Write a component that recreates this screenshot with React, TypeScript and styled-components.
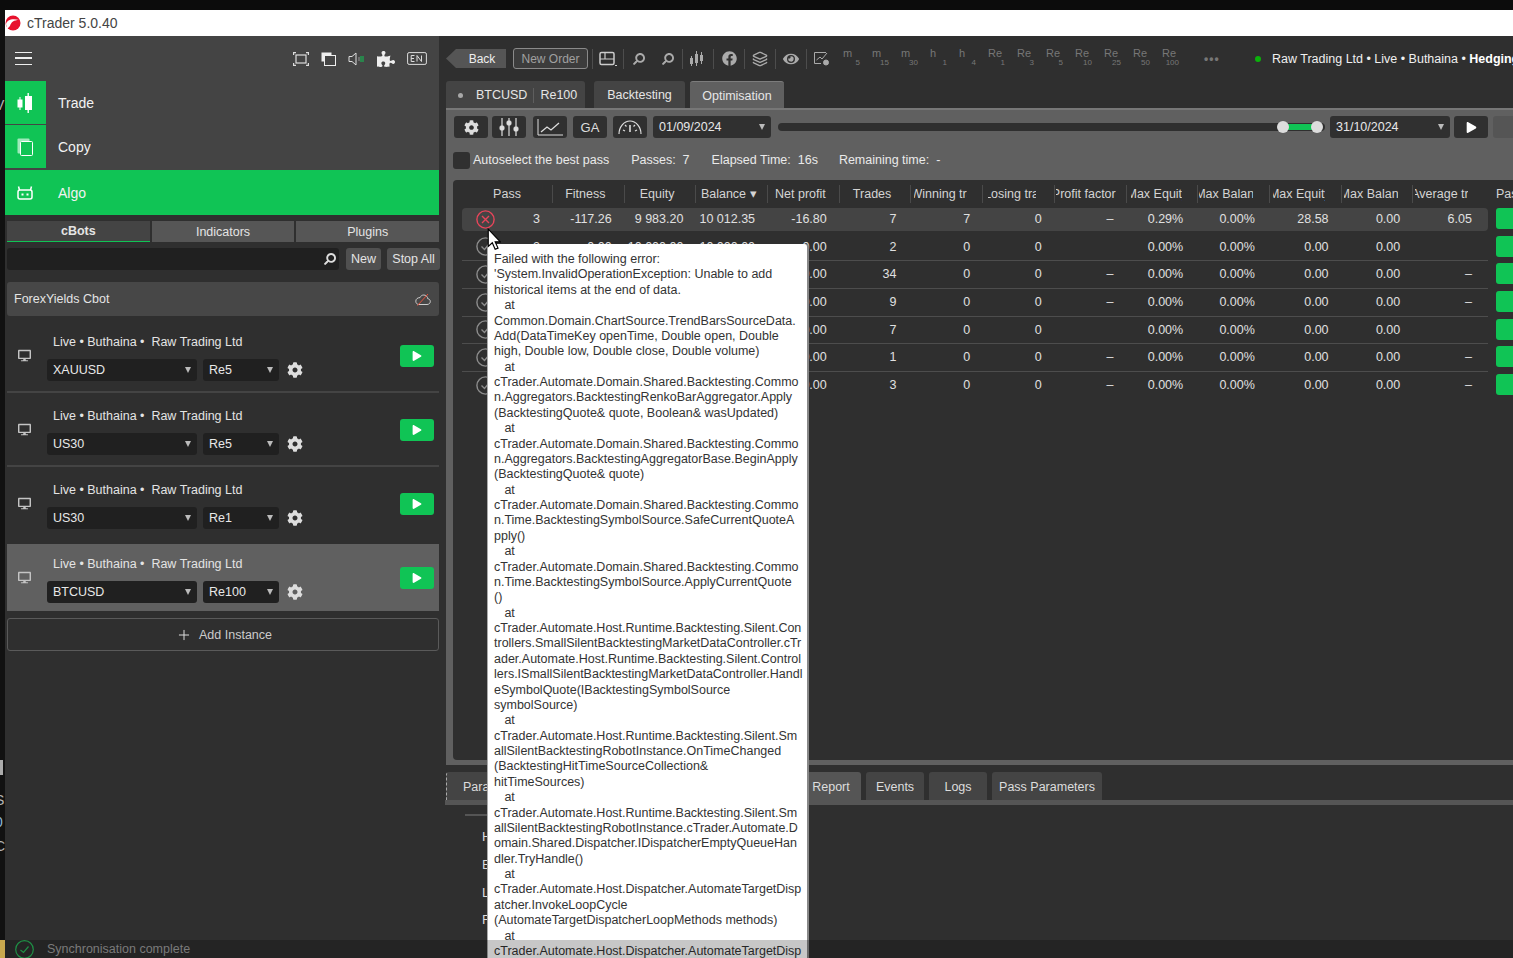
import React from 'react';
import styled, { createGlobalStyle } from 'styled-components';
import { FaCog, FaPuzzlePiece, FaDesktop, FaSearch, FaPlay, FaEye, FaFacebook } from 'react-icons/fa';
import { Layers, Plus } from 'lucide-react';

const GREEN = '#10c455';
const FONT = '"Liberation Sans", Arial, sans-serif';

const GlobalStyle = createGlobalStyle`
  html, body { margin: 0; padding: 0; background: #2f2f2f; overflow: hidden; }
  body { font-family: ${FONT}; font-size: 12.5px; color: #e4e4e4; }
  * { box-sizing: border-box; }
`;

const Page = styled.div`
  position: relative;
  width: 1513px;
  height: 958px;
  display: flex;
  flex-direction: column;
  overflow: hidden;
  background: #0c0c0c;
`;
const TopEdge = styled.div`
  height: 10px;
  flex: none;
`;
const Desk = styled.div`
  flex: 1;
  display: flex;
  min-height: 0;
`;
const Strip = styled.div`
  width: 5px;
  flex: none;
  display: flex;
  flex-direction: column;
  overflow: hidden;
  background: #111;
`;
const StripBit = styled.div<{ $h: number; $c: string; $w?: number; $mt?: string }>`
  height: ${p => p.$h}px;
  width: ${p => p.$w ?? 5}px;
  margin-top: ${p => p.$mt ?? '0'};
  background: ${p => p.$c};
  flex: none;
`;
const StripChar = styled.div<{ $mt: number; $c?: string }>`
  height: 14px;
  line-height: 14px;
  margin-top: ${p => p.$mt}px;
  margin-left: -5px;
  font-size: 14px;
  color: ${p => p.$c ?? '#b5b5b5'};
  flex: none;
`;
const Win = styled.div`
  flex: 1;
  min-width: 0;
  display: flex;
  flex-direction: column;
  background: #2f2f2f;
`;
const TitleBar = styled.div`
  height: 26px;
  flex: none;
  background: #fff;
  display: flex;
  align-items: center;
  color: #444;
  font-size: 14px;
  gap: 6px;
`;
const Body = styled.div`
  flex: 1;
  display: flex;
  min-height: 0;
`;

/* left column */
const Sidebar = styled.div`
  width: 434px;
  flex: none;
  display: flex;
  flex-direction: column;
`;
const SideTop = styled.div`
  background: #444;
`;
const SideHead = styled.div`
  height: 45px;
  display: flex;
  align-items: center;
  padding: 0 12px 0 10px;
  gap: 12px;
`;
const Burger = styled.div`
  width: 17px;
  height: 13px;
  margin-right: auto;
  border-top: 1.5px solid #eee;
  border-bottom: 1.5px solid #eee;
  position: relative;
  &::after {
    content: '';
    position: absolute;
    left: 0;
    right: 0;
    top: 4px;
    height: 1.5px;
    background: #eee;
  }
`;
const NavRow = styled.div<{ $full?: boolean; $h: number; $mb: number }>`
  height: ${p => p.$h}px;
  margin-bottom: ${p => p.$mb}px;
  display: flex;
  align-items: center;
  font-size: 14px;
  color: #f2f2f2;
  background: ${p => (p.$full ? GREEN : 'transparent')};
`;
const NavIcon = styled.div`
  width: 41px;
  height: 100%;
  background: ${GREEN};
  display: flex;
  align-items: center;
  justify-content: center;
  padding-right: 2px;
  margin-right: 12px;
`;
const SideBottom = styled.div`
  flex: 1;
  padding: 6px 0 0 2px;
  display: flex;
  flex-direction: column;
`;
const SideTabs = styled.div`
  display: flex;
  gap: 2px;
  height: 21px;
`;
const SideTab = styled.div<{ $on?: boolean }>`
  flex: 1;
  display: flex;
  align-items: center;
  justify-content: center;
  background: ${p => (p.$on ? '#444' : '#565656')};
  border-bottom: ${p => (p.$on ? `1px solid ${GREEN}` : 'none')};
  font-weight: ${p => (p.$on ? 'bold' : 'normal')};
`;
const SearchRow = styled.div`
  display: flex;
  height: 22px;
  margin-top: 6px;
  width: 433px;
`;
const SearchBox = styled.div`
  width: 332px;
  background: #202020;
  border-radius: 3px;
  display: flex;
  align-items: center;
  justify-content: flex-end;
  padding-right: 3px;
`;
const MirrorSearch = styled(FaSearch)`
  transform: scaleX(-1);
`;
const SmallBtn = styled.div<{ $w: number; $ml: number }>`
  width: ${p => p.$w}px;
  margin-left: ${p => p.$ml}px;
  background: #505050;
  border-radius: 3px;
  display: flex;
  align-items: center;
  justify-content: center;
`;
const BotCard = styled.div`
  height: 34px;
  margin-top: 12px;
  background: #474747;
  border-radius: 3px;
  display: flex;
  align-items: center;
  justify-content: space-between;
  padding: 0 8px 0 7px;
  flex: none;
`;
const Instance = styled.div<{ $sel?: boolean; $line?: boolean }>`
  height: ${p => (p.$line ? 71 : 67)}px;
  margin-top: 6px;
  margin-bottom: ${p => (p.$line ? -3 : 1)}px;
  background: ${p => (p.$sel ? '#606060' : 'transparent')};
  border-bottom: ${p => (p.$line ? '2px solid #444' : 'none')};
  display: flex;
  flex: none;
  padding-bottom: ${p => (p.$line ? 2 : 0)}px;
`;
const InstIcon = styled.div`
  width: 40px;
  display: flex;
  align-items: center;
  justify-content: center;
  padding-right: 5px;
  color: #c4c4c4;
`;
const InstMid = styled.div`
  display: flex;
  flex-direction: column;
  padding-top: 13px;
`;
const InstTitle = styled.div`
  height: 14px;
  margin-left: 6px;
  line-height: 14px;
  white-space: pre;
`;
const InstControls = styled.div`
  display: flex;
  align-items: center;
  margin-top: 10px;
  gap: 6px;
`;
const Select = styled.div<{ $w: number; $ml?: number; $panel?: boolean }>`
  width: ${p => p.$w}px;
  height: 22px;
  margin-left: ${p => p.$ml ?? 0}px;
  background: ${p => (p.$panel ? '#303030' : '#202020')};
  border-radius: 3px;
  display: flex;
  align-items: center;
  justify-content: space-between;
  padding: 0 6px;
  color: #e8e8e8;
  flex: none;
  &::after {
    content: '';
    border-left: 3.5px solid transparent;
    border-right: 3.5px solid transparent;
    border-top: 6px solid #bbb;
  }
`;
const Gear = styled(FaCog)`
  margin-left: 2px;
`;
const PlayBtn = styled.div`
  width: 34px;
  height: 22px;
  margin: 23px 5px 0 auto;
  background: ${GREEN};
  border-radius: 3px;
  display: flex;
  align-items: center;
  justify-content: center;
  color: #fff;
`;
const AddInstance = styled.div`
  height: 33px;
  margin-top: 6px;
  border: 1px solid #5a5a5a;
  border-radius: 3px;
  display: flex;
  align-items: center;
  justify-content: center;
  gap: 7px;
  padding-left: 2px;
  color: #ccc;
  flex: none;
`;

/* right column */
const Right = styled.div`
  flex: 1;
  min-width: 0;
  margin-left: 6px;
  display: flex;
  flex-direction: column;
  overflow: hidden;
`;
const TopBar = styled.div`
  height: 45px;
  flex: none;
  display: flex;
  align-items: center;
  white-space: nowrap;
`;
const BackBtn = styled.div`
  width: 60px;
  height: 19px;
  flex: none;
  margin-left: 1px;
  background: #555;
  clip-path: polygon(0 50%, 10px 0, 100% 0, 100% 100%, 10px 100%);
  display: flex;
  align-items: center;
  justify-content: center;
  padding-left: 12px;
  font-size: 12px;
  color: #eee;
`;
const NewOrder = styled.div`
  width: 75px;
  height: 21px;
  flex: none;
  margin: 0 4px 0 7px;
  border: 1px solid #8a8a8a;
  border-radius: 3px;
  background: #3c3c3c;
  display: flex;
  align-items: center;
  justify-content: center;
  font-size: 12px;
  color: #a0a0a0;
`;
const ToolSlot = styled.div<{ $w?: number }>`
  width: ${p => p.$w ?? 31}px;
  height: 20px;
  border-left: 1px solid #4d4d4d;
  display: flex;
  align-items: center;
  justify-content: space-around;
  color: #aaa;
  flex: none;
`;
const TimeFrame = styled.div`
  width: 29px;
  height: 20px;
  flex: none;
  padding-left: 6px;
  margin-top: -2px;
  color: #777;
  font-size: 11px;
  line-height: 11px;
  position: relative;
  & > span {
    position: absolute;
    right: 6px;
    top: 11px;
    font-size: 8px;
    line-height: 8px;
  }
`;
const Dots = styled.div`
  margin-left: 19px;
  color: #777;
  font-size: 12px;
  letter-spacing: 1px;
  width: 51px;
  flex: none;
  font-weight: bold;
`;
const LiveDot = styled.div`
  width: 6px;
  height: 6px;
  border-radius: 50%;
  background: #0bb10b;
  margin-right: 11px;
  flex: none;
`;
const AccountText = styled.div`
  color: #f0f0f0;
  flex: none;
  & > b { color: #fff; }
`;
const TabRow = styled.div`
  height: 27px;
  flex: none;
  display: flex;
  align-items: flex-end;
  gap: 5px;
  margin-left: 1px;
`;
const Tab = styled.div<{ $w: number; $on?: boolean; $sym?: boolean }>`
  width: ${p => p.$w}px;
  height: 27px;
  background: ${p => (p.$on ? '#606060' : '#444')};
  border-radius: 3px 3px 0 0;
  display: flex;
  align-items: center;
  justify-content: ${p => (p.$sym ? 'flex-start' : 'center')};
  padding: ${p => (p.$sym ? '1px 0 0 12px' : '1px 0 0')};
  border-top: ${p => (p.$on ? '1px solid #7c7c7c' : 'none')};
  margin-right: ${p => (p.$sym ? 4 : 0)}px;
  flex: none;
  color: #e6e6e6;
`;
const TabDot = styled.span`
  width: 5px;
  height: 5px;
  border-radius: 50%;
  background: #a8a8a8;
  margin-right: 13px;
`;
const TabSep = styled.span`
  width: 1px;
  height: 15px;
  background: #5e5e5e;
  margin: 0 6px;
`;
const OptPanel = styled.div`
  height: 657px;
  flex: none;
  background: #606060;
  border-top: 2px solid #777;
  margin-left: 1px;
  padding: 6px 0 5px 7px;
  display: flex;
  flex-direction: column;
`;
const PanelBar = styled.div`
  display: flex;
  height: 22px;
  flex: none;
  align-items: center;
`;
const ToolBtn = styled.div<{ $ml?: number }>`
  width: 34px;
  height: 22px;
  margin-left: ${p => p.$ml ?? 6}px;
  background: #303030;
  border-radius: 3px;
  display: flex;
  align-items: center;
  justify-content: center;
  color: #ddd;
  flex: none;
  font-size: 13px;
`;
const StopBtn = styled(ToolBtn)`
  background: #555;
`;
const RangeTrack = styled.div`
  width: 547px;
  height: 8px;
  margin: 0 5px 0 7px;
  border-radius: 4px;
  background: #2f2f2f;
  position: relative;
  flex: none;
`;
const RangeFill = styled.div`
  position: absolute;
  left: 505px;
  right: 8px;
  top: 1px;
  height: 6px;
  background: ${GREEN};
`;
const RangeKnob = styled.div<{ $x: number }>`
  position: absolute;
  left: ${p => p.$x}px;
  top: -2px;
  width: 12px;
  height: 12px;
  border-radius: 50%;
  background: #ddd;
`;
const AutoRow = styled.div`
  display: flex;
  align-items: center;
  height: 16px;
  margin-top: 14px;
  flex: none;
  color: #eaeaea;
`;
const Check = styled.div`
  width: 17px;
  height: 17px;
  background: #303030;
  border-radius: 3px;
  margin-right: 3px;
`;
const Stat = styled.span<{ $ml: number }>`
  margin-left: ${p => p.$ml}px;
  white-space: pre;
`;
const TablePanel = styled.div`
  margin-top: 12px;
  flex: 1;
  background: #2f2f2f;
  border-radius: 4px 0 0 4px;
  padding-left: 9px;
  overflow: hidden;
`;
const COLS = '90px repeat(13, 71.7px) 4px';
const HeadRow = styled.div`
  height: 28px;
  display: flex;
  align-items: center;
`;
const HeadGrid = styled.div`
  width: 1026px;
  display: grid;
  grid-template-columns: ${COLS};
  flex: none;
`;
const HeadCell = styled.div<{ $first?: boolean }>`
  height: 18px;
  line-height: 18px;
  white-space: nowrap;
  color: #d4d4d4;
  text-align: center;
  padding-right: ${p => (p.$first ? 0 : 6)}px;
  border-left: ${p => (p.$first ? 'none' : '1px solid #4a4a4a')};
`;
/* long captions are cut on both sides, as the app cuts them */
const HeadClip = styled.div<{ $w: number; $ml: number }>`
  width: ${p => p.$w}px;
  margin-left: ${p => p.$ml}px;
  overflow: hidden;
  text-align: left;
  text-indent: -4px;
`;
const HeadLast = styled.div`
  margin-left: 8px;
  color: #d4d4d4;
`;
const Row = styled.div`
  height: 27.7px;
  display: flex;
  align-items: flex-start;
`;
const RowGrid = styled.div<{ $active?: boolean; $line?: boolean }>`
  width: 1026px;
  flex: none;
  display: grid;
  grid-template-columns: ${COLS};
  height: ${p => (p.$active ? 23 : 25.7)}px;
  background: ${p => (p.$active ? '#444' : 'transparent')};
  border-radius: ${p => (p.$active ? 4 : 0)}px;
  border-bottom: ${p => (p.$line ? '1px solid #4d4d4d' : 'none')};
`;
const Cell = styled.div`
  height: 22px;
  line-height: 22px;
  text-align: right;
  padding-right: 12px;
  white-space: pre;
  color: #e0e0e0;
  &:nth-child(6), &:nth-child(10), &:nth-child(11) { padding-right: 14px; }
`;
const FirstCell = styled(Cell)`
  display: flex;
  align-items: center;
  justify-content: space-between;
  padding-left: 14px;
`;
const PassBtn = styled.div`
  width: 60px;
  height: 21px;
  margin-left: 8px;
  background: ${GREEN};
  border-radius: 3px 0 0 3px;
  flex: none;
`;
const BottomArea = styled.div`
  flex: 1;
  margin-top: 7px;
  min-height: 0;
  display: flex;
  flex-direction: column;
`;
const BottomTabs = styled.div`
  height: 28px;
  flex: none;
  display: flex;
  gap: 5px;
  margin-left: 1px;
`;
const LowerTab = styled.div<{ $w: number; $on?: boolean }>`
  width: ${p => p.$w}px;
  background: ${p => (p.$on ? '#555' : '#444')};
  border-radius: 3px 3px 0 0;
  display: flex;
  align-items: center;
  justify-content: center;
  padding-top: 2px;
  color: #ddd;
  flex: none;
`;
const FirstTab = styled(LowerTab)`
  justify-content: flex-start;
  padding-left: 16px;
  border-left: 1px dashed #aaa;
`;
const LowerRule = styled.div`
  height: 5px;
  background: #555;
  flex: none;
`;
const ParamBox = styled.div`
  flex: 1;
  margin-left: 7px;
  padding: 9px 0 0 13px;
  background: #2f2f2f;
`;
const ParamRule = styled.div`
  width: 40px;
  height: 2px;
  background: #555;
  margin-bottom: 14px;
`;
const ParamLabel = styled.div`
  height: 27.8px;
  padding-left: 17px;
  line-height: 14px;
  font-size: 13px;
  color: #ddd;
`;

/* overlays */
const Tooltip = styled.div`
  position: absolute;
  left: 488px;
  top: 244px;
  width: 319px;
  height: 730px;
  background: #fff;
  border-radius: 3px;
  box-shadow: 2px 0 0 #888, -1px 0 0 #aaa;
  padding: 8px 0 0 6px;
  color: #333;
  line-height: 15.37px;
  overflow: hidden;
`;
const TipLine = styled.div`
  white-space: pre;
`;
const Cursor = styled.svg`
  position: absolute;
  left: 487px;
  top: 228px;
`;
const StatusBar = styled.div`
  position: absolute;
  left: 5px;
  right: 0;
  bottom: 0;
  height: 18px;
  background: rgba(0, 0, 0, 0.22);
  display: flex;
  align-items: center;
  padding-left: 10px;
  color: #7a7a7a;
  gap: 13px;
`;

const Logo = () => (
  <svg width="16" height="16" viewBox="0 0 16 16">
    <circle cx="8" cy="8" r="7.5" fill="#e8112d" />
    <path d="M1 9 C2 5 7 3 14 5 C9 5 6 7 5 11 L2 14 Z" fill="#fff" />
  </svg>
);
const FocusIcon = () => (
  <svg width="16" height="14" viewBox="0 0 16 14" fill="none" stroke="#ddd" strokeWidth="1.2">
    <path d="M0.6 3V0.6H3M13 0.6H15.4V3M15.4 11V13.4H13M3 13.4H0.6V11" />
    <rect x="3" y="3" width="10" height="8" />
  </svg>
);
const WindowsIcon = () => (
  <svg width="15" height="14" viewBox="0 0 15 14" fill="none">
    <rect x="0.5" y="0.5" width="10" height="9" fill="#eee" />
    <rect x="3.5" y="3.5" width="11" height="10" fill="#444" stroke="#eee" />
  </svg>
);
const SpeakerIcon = () => (
  <svg width="17" height="14" viewBox="0 0 17 14" fill="none">
    <path d="M1 4.5H4L8 1V13L4 9.5H1Z" stroke="#ddd" />
    <path d="M11 5V9" stroke="#9a9a9a" />
    <path d="M13 4V10M15 4V10" stroke={GREEN} />
  </svg>
);
const LangIcon = () => (
  <svg width="20" height="13" viewBox="0 0 20 13" fill="none">
    <rect x="0.6" y="0.6" width="18.8" height="11.8" rx="1.5" stroke="#ddd" />
    <path d="M7.5 3.5H4.2V9.5H7.5M4.2 6.5H7M10 9.5V3.5L14.5 9.5V3.5" stroke="#ddd" />
  </svg>
);
const CandleIcon = () => (
  <svg width="16" height="20" viewBox="0 0 16 20" fill="#fff">
    <path d="M2.5 4h1v2.5H5.5v8H3.5V17h-1v-2.5H0.5v-8h2z" />
    <path d="M10.5 0h1.4v3H15v14h-3.1v3h-1.4v-3H8V3h2.5z" />
  </svg>
);
const CopyIcon = () => (
  <svg width="16" height="18" viewBox="0 0 16 18" fill="none">
    <rect x="0.5" y="0.5" width="12" height="15" rx="1" fill="#9fe9bb" />
    <rect x="3.5" y="3.5" width="12" height="14" rx="1" fill={GREEN} stroke="#fff" />
  </svg>
);
const RobotIcon = () => (
  <svg width="16" height="14" viewBox="0 0 16 14" fill="none" stroke="#fff" strokeWidth="1.5">
    <rect x="1" y="4" width="14" height="9" rx="2" />
    <path d="M2.5 4L1.5 0.5M13.5 4L14.5 0.5" />
    <path d="M4.5 8.5H6.5M9.5 8.5H11.5" strokeWidth="2" />
  </svg>
);
const CloudOff = () => (
  <svg width="16" height="13" viewBox="0 0 16 13" fill="none">
    <path d="M4 11.5H12C14 11.5 15.3 10.2 15.3 8.5C15.3 6.8 14 5.8 12.8 5.8C12.5 3.5 10.8 2 8.8 2C7 2 5.7 3 5 4.6C2.6 4.6 0.8 6 0.8 8.2C0.8 10.2 2.2 11.5 4 11.5Z" stroke="#ccc" />
    <path d="M2.5 12.5L13 1" stroke="#e8503a" />
  </svg>
);
const LayoutIcon = () => (
  <svg width="18" height="16" viewBox="0 0 18 16" fill="none" stroke="#ccc" strokeWidth="1.5">
    <rect x="1" y="1.5" width="14" height="12" rx="1.5" />
    <path d="M1 8H15M6 8V1.5" strokeWidth="1.2" />
    <path d="M16 14.5H18" strokeWidth="1" />
  </svg>
);
const CandlesSmall = () => (
  <svg width="18" height="16" viewBox="0 0 18 16" fill="#aaa">
    <rect x="1" y="7" width="3" height="6" />
    <rect x="2" y="5" width="1" height="10" />
    <rect x="6" y="3" width="3" height="9" />
    <rect x="7" y="0" width="1" height="15" />
    <rect x="11" y="4" width="3" height="6" />
    <rect x="12" y="1" width="1" height="12" />
  </svg>
);
const ChartGear = () => (
  <svg width="19" height="17" viewBox="0 0 19 17" fill="none" stroke="#aaa">
    <path d="M13 2.5H1.5V13.5H8" />
    <path d="M3.5 10L7 7L9 9L14 3" />
    <circle cx="13" cy="12.5" r="2.5" fill="#aaa" />
  </svg>
);
const SlidersIcon = () => (
  <svg width="20" height="18" viewBox="0 0 20 18" fill="#ddd" stroke="#ddd">
    <path d="M3 0V18M10 0V18M17 0V18" strokeWidth="1.2" />
    <rect x="1" y="8" width="4" height="4" rx="1" />
    <rect x="8" y="3" width="4" height="4" rx="1" />
    <rect x="15" y="9" width="4" height="4" rx="1" />
  </svg>
);
const LineChartIcon = () => (
  <svg width="26" height="17" viewBox="0 0 26 17" fill="none" stroke="#ddd">
    <path d="M1 0V16H26" />
    <path d="M4 13L10 8L14 11L22 4" stroke="#ddd" strokeWidth="1.3" />
  </svg>
);
const GaugeIcon = () => (
  <svg width="26" height="16" viewBox="0 0 26 16" fill="none" stroke="#ddd" strokeWidth="1.2">
    <path d="M2 15C2 8 7 2 13 2C19 2 24 8 24 15" />
    <path d="M13 13V6" strokeWidth="1.6" />
    <path d="M6 11L8 12M20 11L18 12M8 6L9.5 7.5M18 6L16.5 7.5" />
  </svg>
);
const StatusIcon = ({ failed }: { failed?: boolean }) => (
  <svg width="19" height="19" viewBox="0 0 19 19" fill="none" stroke={failed ? '#e8455a' : '#8d8d8d'} strokeWidth="1.4">
    <circle cx="9.5" cy="9.5" r="8.6" />
    {failed ? <path d="M6 6L13 13M13 6L6 13" /> : <path d="M5.5 9.5L8.5 12.5L13.5 6.5" />}
  </svg>
);

const timeframes = [
  ['m', '5'], ['m', '15'], ['m', '30'], ['h', '1'], ['h', '4'], ['Re', '1'],
  ['Re', '3'], ['Re', '5'], ['Re', '10'], ['Re', '25'], ['Re', '50'], ['Re', '100'],
];

const instances = [
  { symbol: 'XAUUSD', period: 'Re5', line: true },
  { symbol: 'US30', period: 'Re5', line: true },
  { symbol: 'US30', period: 'Re1' },
  { symbol: 'BTCUSD', period: 'Re100', sel: true },
];

const headers: { t: string; w?: number; ml?: number }[] = [
  { t: 'Fitness' }, { t: 'Equity' }, { t: 'Balance ▾' }, { t: 'Net profit' }, { t: 'Trades' },
  { t: 'Winning trades', w: 53, ml: 3 },
  { t: 'Losing trades', w: 48, ml: 5 },
  { t: 'Profit factor', w: 65, ml: 1 },
  { t: 'Max Equity', w: 51, ml: 4 },
  { t: 'Max Balance', w: 54, ml: 1 },
  { t: 'Max Equity', w: 52, ml: 3 },
  { t: 'Max Balance', w: 54, ml: 2 },
  { t: 'Average trade', w: 53, ml: 2 },
];

const rows = [
  { pass: '3', v: ['-117.26', '9 983.20', '10 012.35', '-16.80', '7', '7', '0', '–', '0.29%', '0.00%', '28.58', '0.00', '6.05'], failed: true },
  { pass: '2', v: ['0.00', '10 000.00', '10 000.00', '0.00', '2', '0', '0', '', '0.00%', '0.00%', '0.00', '0.00', ''], line: true },
  { pass: '1', v: ['0.00', '10 000.00', '10 000.00', '0.00', '34', '0', '0', '–', '0.00%', '0.00%', '0.00', '0.00', '–'], line: true },
  { pass: '4', v: ['0.00', '10 000.00', '10 000.00', '0.00', '9', '0', '0', '–', '0.00%', '0.00%', '0.00', '0.00', '–'], line: true },
  { pass: '5', v: ['0.00', '10 000.00', '10 000.00', '0.00', '7', '0', '0', '', '0.00%', '0.00%', '0.00', '0.00', ''], line: true },
  { pass: '6', v: ['0.00', '10 000.00', '10 000.00', '0.00', '1', '0', '0', '–', '0.00%', '0.00%', '0.00', '0.00', '–'], line: true },
  { pass: '7', v: ['0.00', '10 000.00', '10 000.00', '0.00', '3', '0', '0', '–', '0.00%', '0.00%', '0.00', '0.00', '–'] },
];

const errorLines = [
  'Failed with the following error:',
  "'System.InvalidOperationException: Unable to add",
  'historical items at the end of data.',
  '   at',
  'Common.Domain.ChartSource.TrendBarsSourceData.',
  'Add(DataTimeKey openTime, Double open, Double',
  'high, Double low, Double close, Double volume)',
  '   at',
  'cTrader.Automate.Domain.Shared.Backtesting.Commo',
  'n.Aggregators.BacktestingRenkoBarAggregator.Apply',
  '(BacktestingQuote& quote, Boolean& wasUpdated)',
  '   at',
  'cTrader.Automate.Domain.Shared.Backtesting.Commo',
  'n.Aggregators.BacktestingAggregatorBase.BeginApply',
  '(BacktestingQuote& quote)',
  '   at',
  'cTrader.Automate.Domain.Shared.Backtesting.Commo',
  'n.Time.BacktestingSymbolSource.SafeCurrentQuoteA',
  'pply()',
  '   at',
  'cTrader.Automate.Domain.Shared.Backtesting.Commo',
  'n.Time.BacktestingSymbolSource.ApplyCurrentQuote',
  '()',
  '   at',
  'cTrader.Automate.Host.Runtime.Backtesting.Silent.Con',
  'trollers.SmallSilentBacktestingMarketDataController.cTr',
  'ader.Automate.Host.Runtime.Backtesting.Silent.Control',
  'lers.ISmallSilentBacktestingMarketDataController.Handl',
  'eSymbolQuote(IBacktestingSymbolSource',
  'symbolSource)',
  '   at',
  'cTrader.Automate.Host.Runtime.Backtesting.Silent.Sm',
  'allSilentBacktestingRobotInstance.OnTimeChanged',
  '(BacktestingHitTimeSourceCollection&',
  'hitTimeSources)',
  '   at',
  'cTrader.Automate.Host.Runtime.Backtesting.Silent.Sm',
  'allSilentBacktestingRobotInstance.cTrader.Automate.D',
  'omain.Shared.Dispatcher.IDispatcherEmptyQueueHan',
  'dler.TryHandle()',
  '   at',
  'cTrader.Automate.Host.Dispatcher.AutomateTargetDisp',
  'atcher.InvokeLoopCycle',
  '(AutomateTargetDispatcherLoopMethods methods)',
  '   at',
  'cTrader.Automate.Host.Dispatcher.AutomateTargetDisp',
];

const App = () => {
  return (
    <Page>
      <GlobalStyle />
      <TopEdge />
      <Desk>
        <Strip>
          <StripChar $mt={88}>V</StripChar>
          <StripBit $h={15} $w={3} $c="#aaa" $mt="648px" />
          <StripChar $mt={18}>S</StripChar>
          <StripChar $mt={8} $c="#8fb8d8">0</StripChar>
          <StripChar $mt={10}>C</StripChar>
          <StripBit $h={18} $c="#c9a84e" $mt="auto" />
        </Strip>
        <Win>
          <TitleBar>
            <Logo />
            cTrader 5.0.40
          </TitleBar>
          <Body>
            <Sidebar>
              <SideTop>
                <SideHead>
                  <Burger />
                  <FocusIcon />
                  <WindowsIcon />
                  <SpeakerIcon />
                  <FaPuzzlePiece size={18} color="#eee" />
                  <LangIcon />
                </SideHead>
                <NavRow $h={43} $mb={1}>
                  <NavIcon><CandleIcon /></NavIcon>
                  Trade
                </NavRow>
                <NavRow $h={43} $mb={2}>
                  <NavIcon><CopyIcon /></NavIcon>
                  Copy
                </NavRow>
                <NavRow $h={45} $mb={0} $full>
                  <NavIcon><RobotIcon /></NavIcon>
                  Algo
                </NavRow>
              </SideTop>
              <SideBottom>
                <SideTabs>
                  <SideTab $on>cBots</SideTab>
                  <SideTab>Indicators</SideTab>
                  <SideTab>Plugins</SideTab>
                </SideTabs>
                <SearchRow>
                  <SearchBox>
                    <MirrorSearch size={12} color="#ddd" />
                  </SearchBox>
                  <SmallBtn $w={35} $ml={7}>New</SmallBtn>
                  <SmallBtn $w={53} $ml={6}>Stop All</SmallBtn>
                </SearchRow>
                <BotCard>
                  ForexYields Cbot
                  <CloudOff />
                </BotCard>
                {instances.map((it, i) => (
                  <Instance key={i} $sel={it.sel} $line={it.line}>
                    <InstIcon><FaDesktop size={13} /></InstIcon>
                    <InstMid>
                      <InstTitle>Live • Buthaina •  Raw Trading Ltd</InstTitle>
                      <InstControls>
                        <Select $w={150}>{it.symbol}</Select>
                        <Select $w={76}>{it.period}</Select>
                        <Gear size={16} color="#ddd" />
                      </InstControls>
                    </InstMid>
                    <PlayBtn><FaPlay size={10} /></PlayBtn>
                  </Instance>
                ))}
                <AddInstance>
                  <Plus size={16} strokeWidth={1.5} color="#ddd" />
                  Add Instance
                </AddInstance>
              </SideBottom>
            </Sidebar>
            <Right>
              <TopBar>
                <BackBtn>Back</BackBtn>
                <NewOrder>New Order</NewOrder>
                <ToolSlot><LayoutIcon /></ToolSlot>
                <ToolSlot $w={59}>
                  <MirrorSearch size={12} />
                  <MirrorSearch size={12} />
                </ToolSlot>
                <ToolSlot><CandlesSmall /></ToolSlot>
                <ToolSlot><FaFacebook size={15} /></ToolSlot>
                <ToolSlot><Layers size={16} /></ToolSlot>
                <ToolSlot><FaEye size={16} /></ToolSlot>
                <ToolSlot><ChartGear /></ToolSlot>
                {timeframes.map(([a, b], i) => (
                  <TimeFrame key={i}>{a}<span>{b}</span></TimeFrame>
                ))}
                <Dots>•••</Dots>
                <LiveDot />
                <AccountText>Raw Trading Ltd • Live • Buthaina • <b>Hedging</b></AccountText>
              </TopBar>
              <TabRow>
                <Tab $w={139} $sym><TabDot />BTCUSD<TabSep />Re100</Tab>
                <Tab $w={91}>Backtesting</Tab>
                <Tab $w={94} $on>Optimisation</Tab>
              </TabRow>
              <OptPanel>
                <PanelBar>
                  <ToolBtn $ml={1}><FaCog size={15} /></ToolBtn>
                  <ToolBtn $ml={4}><SlidersIcon /></ToolBtn>
                  <ToolBtn $ml={7}><LineChartIcon /></ToolBtn>
                  <ToolBtn>GA</ToolBtn>
                  <ToolBtn><GaugeIcon /></ToolBtn>
                  <Select $w={118} $ml={6} $panel>01/09/2024</Select>
                  <RangeTrack>
                    <RangeFill />
                    <RangeKnob $x={499} />
                    <RangeKnob $x={533} />
                  </RangeTrack>
                  <Select $w={120} $panel>31/10/2024</Select>
                  <ToolBtn $ml={4}><FaPlay size={11} color="#fff" /></ToolBtn>
                  <StopBtn $ml={5} />
                </PanelBar>
                <AutoRow>
                  <Check />
                  Autoselect the best pass
                  <Stat $ml={22}>Passes:  7</Stat>
                  <Stat $ml={22}>Elapsed Time:  16s</Stat>
                  <Stat $ml={21}>Remaining time:  -</Stat>
                </AutoRow>
                <TablePanel>
                  <HeadRow>
                    <HeadGrid>
                      <HeadCell $first>Pass</HeadCell>
                      {headers.map((h, i) => (
                        <HeadCell key={i}>
                          {h.w ? <HeadClip $w={h.w} $ml={h.ml ?? 0}>{h.t}</HeadClip> : h.t}
                        </HeadCell>
                      ))}
                    </HeadGrid>
                    <HeadLast>Pass</HeadLast>
                  </HeadRow>
                  {rows.map((r, i) => (
                    <Row key={i}>
                      <RowGrid $active={r.failed} $line={r.line}>
                        <FirstCell>
                          <StatusIcon failed={r.failed} />
                          {r.pass}
                        </FirstCell>
                        {r.v.map((v, j) => (
                          <Cell key={j}>{v}</Cell>
                        ))}
                      </RowGrid>
                      <PassBtn />
                    </Row>
                  ))}
                </TablePanel>
              </OptPanel>
              <BottomArea>
                <BottomTabs>
                  <FirstTab $w={90}>Parameters</FirstTab>
                  <LowerTab $w={255} />
                  <LowerTab $w={60} $on>Report</LowerTab>
                  <LowerTab $w={58}>Events</LowerTab>
                  <LowerTab $w={58}>Logs</LowerTab>
                  <LowerTab $w={110}>Pass Parameters</LowerTab>
                </BottomTabs>
                <LowerRule />
                <ParamBox>
                  <ParamRule />
                  <ParamLabel>Hedging</ParamLabel>
                  <ParamLabel>Equity</ParamLabel>
                  <ParamLabel>Lots</ParamLabel>
                  <ParamLabel>Fitness</ParamLabel>
                </ParamBox>
              </BottomArea>
            </Right>
          </Body>
        </Win>
      </Desk>
      <Tooltip>
        {errorLines.map((l, i) => (
          <TipLine key={i}>{l}</TipLine>
        ))}
      </Tooltip>
      <Cursor width="14" height="23" viewBox="0 0 12 20">
        <path d="M1 1V16L4.5 12.8L7 18.5L9.5 17.5L7 12H11.5Z" fill="#fff" stroke="#000" strokeWidth="1" />
      </Cursor>
      <StatusBar>
        <svg width="19" height="19" viewBox="0 0 19 19" fill="none" stroke="#1f8f45" strokeWidth="1.2">
          <circle cx="9.5" cy="9.5" r="8.8" />
          <path d="M5.5 10L8.5 12.5L13.5 6.5" />
        </svg>
        Synchronisation complete
      </StatusBar>
    </Page>
  );
};

export default App;
